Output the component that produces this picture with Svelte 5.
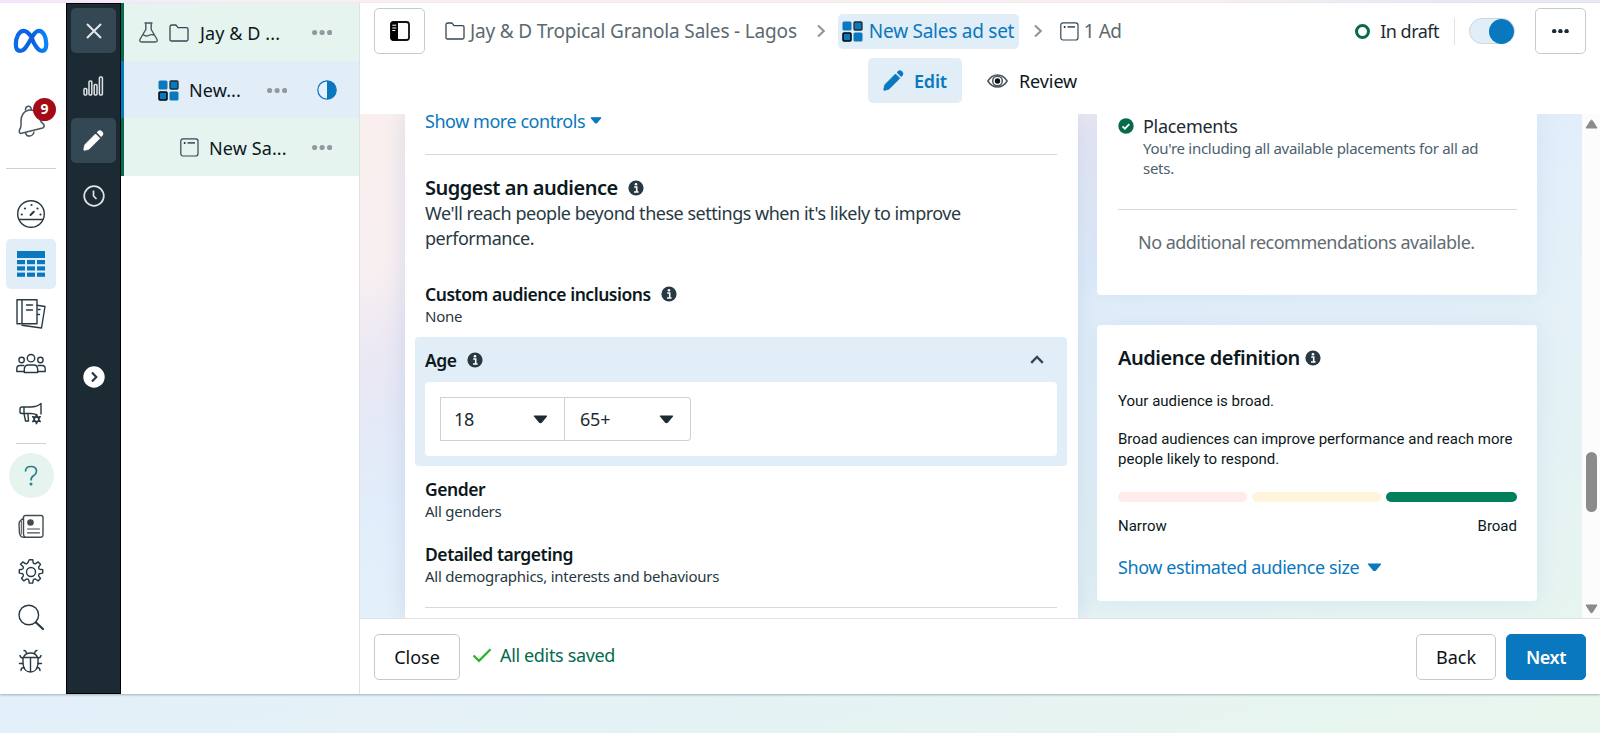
<script>
  const nav = [
    { icon: 'gauge' },
    { icon: 'table', active: true },
    { icon: 'pages' },
    { icon: 'people' },
    { icon: 'megaphone' },
  ]

  const tools = ['news', 'gear', 'search', 'bug']

  const ages = ['18', '65+']

  const levels = ['narrow', 'medium', 'broad']
</script>

{#snippet info()}
  <svg class="info" width="16" height="16" viewBox="0 0 16 16">
    <circle cx="8" cy="8" r="7.6" fill="#283943" />
    <path d="M6.2 7h2.5v5M6 12h4.6" stroke="#fff" stroke-width="1.6" fill="none" />
    <circle cx="8" cy="4.2" r="1.3" fill="#fff" />
  </svg>
{/snippet}

{#snippet caret(w, h)}
  <svg width={w} height={h} viewBox="0 0 14 8.4">
    <path d="M1.4 1h11.2L8 6.600q-1 1-2 0z" fill="currentColor" stroke="currentColor" stroke-width="1.2" stroke-linejoin="round" />
  </svg>
{/snippet}

{#snippet folder()}
  <svg width="20" height="18" viewBox="0 0 20 18" fill="none" stroke="#344854" stroke-width="1.3" stroke-linejoin="round">
    <path d="M1 3Q1 1 3 1h3.2q1 0 1.5.8L9 3.6h8.5Q19 3.6 19 5v10.500Q19 17 17.500 17h-15Q1 17 1 15.500z" />
  </svg>
{/snippet}

{#snippet adset()}
  <svg width="21" height="21" viewBox="0 0 21 21">
    <g fill="#0a78be">
      <rect x="0.500" y="0.500" width="9" height="9" rx="1.500" />
      <rect x="12" y="1" width="8" height="8" rx="1" stroke="#1c2b33" stroke-width="1.3" />
      <rect x="1" y="12" width="8" height="8" rx="1" stroke="#000" stroke-width="1.5" />
      <rect x="11.500" y="11.500" width="9" height="9" rx="1.500" />
    </g>
  </svg>
{/snippet}

{#snippet ad()}
  <svg width="19" height="19" viewBox="0 0 19 19" fill="none" stroke="#344854" stroke-width="1.2">
    <rect x="0.800" y="0.800" width="17.200" height="17.200" rx="2.200" />
    <path d="M7.500 4.900h7.500" stroke-width="1.5" />
    <circle cx="4.700" cy="4.900" r="1" fill="#1c2b33" stroke="none" />
  </svg>
{/snippet}

{#snippet dots(r, gap)}
  <svg width={gap * 2 + r * 2} height={r * 2} fill="currentColor">
    <circle cx={r} cy={r} {r} />
    <circle cx={r + gap} cy={r} {r} />
    <circle cx={r + gap * 2} cy={r} {r} />
  </svg>
{/snippet}

{#snippet pencil()}
  <svg width="21" height="21" viewBox="0 0 21 21" fill="currentColor">
    <path d="M12.500 4l4.300 4.300L6.600 18.600q-.5.5-1.100.7L1.700 20.300q-1.100.2-.9-.9l.8-4q.2-.6.7-1.100z" stroke="currentColor" stroke-width="0.800" stroke-linejoin="round" />
    <path d="M13.800 2.400l1.200-1.400q2-1.600 4.200.6 2 2.100.4 4L18.100 6.900z" />
  </svg>
{/snippet}

{#snippet chevron()}
  <svg width="10" height="14" viewBox="0 0 10 14" fill="none" stroke="#8a939a" stroke-width="2">
    <path d="M2 1.500L7.800 7 2 12.500" />
  </svg>
{/snippet}

{#snippet navIcon(name)}
  <svg width="30" height="30" viewBox="0 0 30 30" fill="none" stroke="#283943" stroke-width="1.4" stroke-linecap="round" stroke-linejoin="round">
    {#if name === 'gauge'}
      <circle cx="15" cy="15" r="13.300" />
      <path d="M3.300 20.500h23.400" />
      <path d="M14.500 16l3.300-3.300" stroke-width="2" />
      <g fill="#283943" stroke="none">
        <circle cx="5.800" cy="15.500" r="1.100" /><circle cx="9" cy="9.500" r="1.100" /><circle cx="15.500" cy="6" r="1.100" />
        <circle cx="21.500" cy="9.500" r="1.100" /><circle cx="24.500" cy="15.500" r="1.100" />
      </g>
    {:else if name === 'table'}
      <g fill="#0a78be" stroke="none">
        <rect x="1" y="2" width="28" height="7" />
        {#each [11, 17.3, 23.6] as y}
          {#each [1, 11, 21] as x}
            <rect {x} {y} width="8" height="4.200" />
          {/each}
        {/each}
      </g>
    {:else if name === 'pages'}
      <path d="M21 6.200l8 1.300L25.500 29 6 26.300" />
      <path d="M1 .8h20v24H1zM6 .8v24" />
      <path d="M10.500 6h6M10.500 11h6M22 10.500h2M21.500 15.500h2" />
    {:else if name === 'people'}
      <circle cx="15" cy="9.200" r="3.700" />
      <circle cx="5.600" cy="11" r="2.700" />
      <circle cx="24.400" cy="11" r="2.700" />
      <path d="M8.300 23.500v-3q0-4.500 4-4.500h5.400q4 0 4 4.500v3z" />
      <path d="M8 22.500H.8V20q0-3.500 3-3.500h4M22 22.500h7.200V20q0-3.500-3-3.500h-4" />
    {:else if name === 'megaphone'}
      <path d="M25 15V4.500q-4 3.500-10.500 3.500H6q-2 0-2 2v3q0 1.500 2 1.500h8.500q4 0 6.500 1.500M8 8v6" />
      <path d="M8 14.500l1.500 7.500h3l-.6-7.500" />
      <path d="M20.500 15.500l1 2.700 2.800-.6-1.700 2.500 1.700 2.500-2.800-.6-1 2.700-1-2.700-2.800.6 1.700-2.500-1.700-2.500 2.800.6z" fill="#283943" />
      <circle cx="20.500" cy="20.200" r="1.500" fill="#fff" stroke="none" />
    {:else if name === 'news'}
      <g stroke="#444b50">
        <path d="M7.500 5.500q0-2 2-2H25q2 0 2 2v17.500q0 2-2 2.300H8q-3.500 0-4.500-4L3 12q0-2 1.500-3.500l3-2.500zM7.500 6v16q0 2.500 1.500 3" />
        <path d="M5.300 9v13" stroke-width="1" />
        <circle cx="14.500" cy="10.500" r="2.600" fill="#444b50" />
        <path d="M11.500 17h12M11.500 20.800h12" stroke-width="1.2" />
      </g>
    {:else if name === 'gear'}
      <circle cx="15" cy="15" r="4.500" />
      <path d="M13.300 2.700h3.400l.5 2.900q.3.700 1 1 .8.300 1.500 0l2.400-1.700 2.400 2.400-1.700 2.500q-.4.700 0 1.400.3.800 1 1l2.900.5v3.400l-2.900.5q-.7.300-1 1-.3.800 0 1.500l1.700 2.400-2.400 2.400-2.400-1.700q-.7-.3-1.500 0-.7.300-1 1l-.5 2.900h-3.400l-.5-2.900q-.3-.7-1-1-.8-.3-1.500 0l-2.400 1.700-2.400-2.400 1.700-2.400q.3-.7 0-1.500-.3-.7-1-1l-2.900-.5v-3.400l2.900-.5q.7-.3 1-1 .3-.8 0-1.500L4.500 7.300l2.400-2.400 2.400 1.700q.7.300 1.500 0 .7-.3 1-1z" />
    {:else if name === 'search'}
      <circle cx="12.800" cy="13" r="9.800" />
      <path d="M20 20.500l7 6.500" stroke-width="2.200" />
    {:else if name === 'bug'}
      <path d="M7.500 10.500Q9 6 14.500 6t7 4.500zM7 10.500v6.500q1 8 7.500 8t7.500-8v-6.500M14.500 11v14" />
      <path d="M8 3.500q2 0 2.500 3M21 3.500q-2 0-2.500 3M7 11q-2.500 0-3-2.500M22 11q2.500 0 3-2.500M7 16.500H3.500M22 16.500h3.500M8 20.500q-3 0-3 3M21 20.500q3 0 3 3" />
    {/if}
  </svg>
{/snippet}

<div class="page">
  <div class="app">
    <nav class="rail">
      <svg class="logo" width="36" height="26" viewBox="0 0 36 26" fill="none" stroke-width="4.200" stroke-linecap="round">
        <defs>
          <linearGradient id="meta" x1="0" x2="1">
            <stop offset="0" stop-color="#0a6be8" />
            <stop offset="0.550" stop-color="#0a60df" />
            <stop offset="1" stop-color="#0a85fc" />
          </linearGradient>
        </defs>
        <path stroke="url(#meta)" d="M18 8.500C15.500 4.500 13.300 2.800 10.700 2.800 6 2.800 2.800 9.500 2.800 16.200c0 4 1.600 6.700 4.500 6.700 3.500 0 5.500-3.200 8-7.400L19 9.300c2-3.700 4.200-6.500 7-6.500 4.300 0 7.300 6.300 7.300 13.200 0 4.400-1.500 6.900-4.400 6.900-3.300 0-5.100-3-7.900-7.700z" />
      </svg>

      <div class="bell">
        <svg width="30" height="34" viewBox="0 0 30 34" fill="none" stroke="#4a565e" stroke-width="1.500" stroke-linejoin="round">
          <path d="M4.500 30.500Q3 30 3.300 27.500 5.500 24 5 19.500 4.500 9 13 7q8.500-.8 10.500 8 1.200 4.500 4.200 6.300 1.300 2.500-1 3.700z" />
          <path d="M9.500 7.500Q9.200 3.500 12.200 3.200 15 3 15.500 7M9.500 30q1 3.500 4.500 3 3.500-.5 4-4.500" />
        </svg>
        <span class="badge">9</span>
      </div>

      <div class="line wide"></div>

      {#each nav as item}
        <div class="nav-item" class:active={item.active}>{@render navIcon(item.icon)}</div>
      {/each}

      <div class="line"></div>

      <div class="help">
        <svg width="14" height="22" viewBox="0 0 14 22" fill="none" stroke="#2b7f8b" stroke-width="1.700">
          <path d="M1.500 6.500Q1.500 1.500 7 1.500t5.500 4.700q0 2.600-2.700 4.400Q7 12.200 7 15.500" />
          <circle cx="7" cy="19" r="1.500" fill="#2b7f8b" stroke="none" />
        </svg>
      </div>

      {#each tools as t}
        <div class="tool">{@render navIcon(t)}</div>
      {/each}
    </nav>

    <div class="dark">
      <div class="dark-btn filled">
        <svg width="18" height="18" viewBox="0 0 18 18" stroke="#e4e8ea" stroke-width="2"><path d="M2 2l14 14M16 2L2 16" /></svg>
      </div>
      <div class="dark-btn">
        <svg width="21" height="20" viewBox="0 0 21 20" fill="none" stroke="#dfe3e6" stroke-width="1.500">
          <rect x="1" y="12.500" width="2.800" height="6.500" rx="1" />
          <rect x="6" y="5" width="2.800" height="14" rx="1" />
          <rect x="11.200" y="8.500" width="2.800" height="10.500" rx="1" />
          <rect x="16.400" y="1" width="3" height="18" rx="1" />
        </svg>
      </div>
      <div class="dark-btn filled">{@render pencil()}</div>
      <div class="dark-btn">
        <svg width="22" height="22" viewBox="0 0 22 22" fill="none" stroke="#dfe3e6" stroke-width="1.700">
          <circle cx="11" cy="11" r="9.800" />
          <path d="M10.500 5.500V11l3 3" />
        </svg>
      </div>
      <svg class="expand" width="22" height="22" viewBox="0 0 22 22">
        <circle cx="11" cy="11" r="10.700" fill="#fff" />
        <path d="M9 6.500l4.300 4.500L9 15.500" fill="none" stroke="#283943" stroke-width="2.200" />
      </svg>
    </div>

    <aside class="tree">
      <div class="row campaign">
        <svg width="19" height="21" viewBox="0 0 19 21" fill="none" stroke="#4a565e" stroke-width="1.400" stroke-linejoin="round">
          <path d="M5.500 1h8M6.800 1v6.500L1.200 17q-1.300 3 1.500 3h13.600q2.800 0 1.500-3L12.200 7.500V1M4 12.500q3 2.500 5.500 1t5.500-.5" />
        </svg>
        {@render folder()}
        <span class="row-name">Jay &amp; D ...</span>
        <span class="more">{@render dots(2.6, 7.5)}</span>
      </div>
      <div class="row adset">
        {@render adset()}
        <span class="row-name">New...</span>
        <span class="more">{@render dots(2.6, 7.5)}</span>
        <svg class="half" width="20" height="20" viewBox="0 0 20 20">
          <circle cx="10" cy="10" r="9.200" fill="#e4f1fb" stroke="#0a78be" stroke-width="1.200" />
          <path d="M10 .8a9.200 9.200 0 0 1 0 18.400z" fill="#0a78be" />
        </svg>
      </div>
      <div class="row ad">
        {@render ad()}
        <span class="row-name">New Sa...</span>
        <span class="more">{@render dots(2.6, 7.5)}</span>
      </div>
    </aside>

    <main>
      <header>
        <div class="crumbs">
          <button class="box">
            <svg width="20" height="20" viewBox="0 0 20 20">
              <rect x="1" y="1" width="18" height="18" rx="2.500" fill="#fff" stroke="#111" stroke-width="1.800" />
              <path d="M2.500.5H8v19H2.500q-2 0-2-2v-15q0-2 2-2z" fill="#000" />
              <path d="M2.300 4.200h4M2.300 7h4M2.300 9.500h3" stroke="#fff" stroke-width="1" />
            </svg>
          </button>
          <span class="crumb first">{@render folder()}<span>Jay &amp; D Tropical Granola Sales - Lagos</span></span>
          {@render chevron()}
          <span class="crumb current">{@render adset()}<span>New Sales ad set</span></span>
          {@render chevron()}
          <span class="crumb last">{@render ad()}<span>1 Ad</span></span>

          <div class="status">
            <span class="ring"></span>
            <span class="draft">In draft</span>
            <span class="sep"></span>
            <span class="toggle"><span class="knob"></span></span>
            <button class="box dark-dots">{@render dots(2.2, 6.2)}</button>
          </div>
        </div>
        <div class="tabs">
          <button class="tab on">{@render pencil()}<span>Edit</span></button>
          <button class="tab">
            <svg width="21" height="14" viewBox="0 0 21 14" fill="none" stroke="#4a565e" stroke-width="1.500">
              <path d="M.9 7Q4.500.9 10.500.9T20.100 7q-3.600 6.100-9.600 6.100T.9 7z" />
              <circle cx="10.500" cy="7" r="4.800" />
              <circle cx="10.500" cy="7" r="2.700" fill="#111" stroke="none" />
            </svg>
            <span>Review</span>
          </button>
        </div>
      </header>

      <section class="content">
        <div class="form">
          <div class="link controls">Show more controls {@render caret(12, 7.2)}</div>
          <hr />
          <h2>Suggest an audience {@render info()}</h2>
          <p class="lead">We'll reach people beyond these settings when it's likely to improve performance.</p>

          <div class="field inclusions">
            <h3>Custom audience inclusions {@render info()}</h3>
            <p>None</p>
          </div>

          <div class="age">
            <div class="age-head">
              <h3>Age {@render info()}</h3>
              <svg width="14" height="9" viewBox="0 0 14 9" fill="none" stroke="#344854" stroke-width="2.400"><path d="M1.200 7.800L7 2l5.800 5.800" /></svg>
            </div>
            <div class="age-body">
              {#each ages as a}
                <div class="select"><span>{a}</span>{@render caret(15, 9)}</div>
              {/each}
            </div>
          </div>

          <div class="field gender">
            <h3>Gender</h3>
            <p>All genders</p>
          </div>
          <div class="field targeting">
            <h3>Detailed targeting</h3>
            <p>All demographics, interests and behaviours</p>
          </div>
          <hr class="end" />
        </div>

        <div class="side">
          <div class="card recs">
            <div class="placement">
              <svg width="16" height="16" viewBox="0 0 16 16">
                <circle cx="8" cy="8" r="7.700" fill="#056b4c" />
                <path d="M4.500 8.300l2.400 2.400 4.400-4.600" fill="none" stroke="#fff" stroke-width="1.700" />
              </svg>
              <div>
                <div class="place-title">Placements</div>
                <p>You're including all available placements for all ad sets.</p>
              </div>
            </div>
            <hr />
            <p class="none">No additional recommendations available.</p>
          </div>

          <div class="card audience">
            <h2>Audience definition {@render info()}</h2>
            <p>Your audience is broad.</p>
            <p>Broad audiences can improve performance and reach more people likely to respond.</p>
            <div class="meter">
              {#each levels as level}
                <span class={level}></span>
              {/each}
            </div>
            <div class="ends"><span>Narrow</span><span>Broad</span></div>
            <div class="link estimate">Show estimated audience size {@render caret(15, 9)}</div>
          </div>
        </div>

        <div class="scrollbar">
          <svg width="13" height="10" viewBox="0 0 13 10"><path d="M1 9h11L7.500 1.800q-1-1.300-2 0z" fill="#8b8b8b" stroke="#8b8b8b" stroke-linejoin="round" /></svg>
          <span class="thumb"></span>
          <svg width="13" height="10" viewBox="0 0 13 10"><path d="M1 1h11L7.500 8.200q-1 1.300-2 0z" fill="#8b8b8b" stroke="#8b8b8b" stroke-linejoin="round" /></svg>
        </div>
      </section>

      <footer>
        <button class="btn close">Close</button>
        <svg class="tick" width="20" height="15" viewBox="0 0 20 15" fill="none" stroke="#2bb52b" stroke-width="2.300"><path d="M1.500 7.500l5.500 5.300L18.500 1.200" /></svg>
        <span class="saved">All edits saved</span>
        <button class="btn back">Back</button>
        <button class="btn next">Next</button>
      </footer>
    </main>
  </div>
</div>

<style>
  :global(body) {
    margin: 0;
    overflow: hidden;
  }

  .page {
    height: 733px;
    box-sizing: border-box;
    padding-top: 3px;
    background: linear-gradient(161.6deg, #f4e6fb 0%, #f8eef6 6%, #faefee 18%, #f8eff1 31%, #ebe8f4 38%, #e5e9f6 43%, #e1edfa 50%, #e4f0f9 58%, #e5f2f5 74%, #e8f6ee 97%);
    color: #0c1820;
    font-family: "Noto Sans", "Open Sans", sans-serif;
    font-size: 18px;
  }

  .page :global(svg) { flex: none; display: block; }

  .app {
    display: flex;
    height: 691px;
    box-shadow: 0 1px 2px rgba(60, 80, 90, 0.4);
  }

  h2, h3, p { margin: 0; }

  hr {
    border: 0;
    height: 1px;
    margin: 0;
    background: #d5d9dd;
  }

  button {
    font: inherit;
    color: inherit;
    padding: 0;
  }

  /* icon rail */
  .rail {
    width: 66px;
    background: #fff;
    display: flex;
    flex-direction: column;
    align-items: center;
    box-sizing: border-box;
    padding: 25px 4px 0 0;
  }

  .bell {
    position: relative;
    width: 30px;
    height: 34px;
    margin: 49px 0 31px;
  }

  .badge {
    position: absolute;
    left: 17px;
    top: -5px;
    width: 23px;
    height: 23px;
    border-radius: 50%;
    background: #a40b16;
    color: #fff;
    font-size: 14px;
    font-weight: 700;
    line-height: 22px;
    text-align: center;
  }

  .line {
    width: 30px;
    height: 1px;
    margin: 4px 0 9px;
    background: #ced2d8;
  }

  .line.wide {
    width: 50px;
    margin: 0 0 20px;
  }

  .nav-item {
    width: 50px;
    height: 50px;
    border-radius: 5px;
    display: grid;
    place-items: center;
  }

  .nav-item.active { background: #e1edf7; }

  .help {
    width: 45px;
    height: 45px;
    border-radius: 50%;
    background: #e5f4ef;
    display: grid;
    place-items: center;
    margin-bottom: 6px;
  }

  .tool { height: 45px; display: grid; place-items: center; }

  /* dark toolbar */
  .dark {
    width: 55px;
    box-sizing: border-box;
    border: 1px solid #000;
    background: #1c2b33;
    color: #fff;
    display: flex;
    flex-direction: column;
    align-items: center;
    gap: 10px;
    padding-top: 4px;
  }

  .dark-btn {
    width: 45px;
    height: 45px;
    border-radius: 5px;
    display: grid;
    place-items: center;
  }

  .dark-btn.filled { background: #344854; }

  .expand { margin-top: 138px; }

  /* campaign tree */
  .tree {
    width: 239px;
    box-sizing: border-box;
    background: #fff;
    border-right: 1px solid #dfe1e4;
  }

  .row {
    display: flex;
    align-items: center;
    height: 57.5px;
    box-sizing: border-box;
    border-left: 3px solid #056b4c;
    background: #e5f4ee;
    padding: 2px 27px 0 0;
  }

  .row.campaign { padding-left: 15px; }
  .row.campaign :global(svg + svg) { margin-left: 11px; }
  .row.adset { padding-left: 34px; padding-right: 22px; background: #e1edf7; border-color: #0a78be; }
  .row.ad { padding-left: 56px; }

  .row-name { margin-left: 10px; white-space: nowrap; letter-spacing: 0.1px; }
  .campaign .row-name { margin-left: 11px; }

  .more { margin-left: auto; color: #9199a1; }

  .half { margin-left: 30px; }

  main {
    flex: 1;
    display: flex;
    flex-direction: column;
    min-width: 0;
  }

  header {
    height: 111px;
    background: #fff;
    box-sizing: border-box;
    padding: 5px 14px 0;
  }

  .crumbs {
    display: flex;
    align-items: center;
    height: 46px;
    color: #5c6970;
    font-size: 19px;
    letter-spacing: -0.17px;
  }

  .box {
    width: 51px;
    height: 46px;
    display: grid;
    place-items: center;
    background: #fff;
    border: 1px solid #c3cbd3;
    border-radius: 5px;
  }

  .crumb {
    display: flex;
    align-items: center;
    gap: 5px;
    white-space: nowrap;
  }

  .crumb.first { margin: 0 19px 0 20px; }

  .crumb.current {
    box-sizing: border-box;
    width: 181px;
    height: 35px;
    margin: 0 14px 0 12px;
    padding-left: 4px;
    border-radius: 5px;
    background: #e1edf7;
    color: #0a78be;
    gap: 6px;
    letter-spacing: -0.25px;
  }

  .crumb.last { margin-left: 17px; letter-spacing: -0.5px; }

  .status {
    margin-left: auto;
    display: flex;
    align-items: center;
    color: #1c2b33;
    font-size: 18px;
  }

  .ring {
    width: 9px;
    height: 9px;
    border: 3px solid #056b4c;
    border-radius: 50%;
    margin-right: 10px;
  }

  .draft { letter-spacing: -0.5px; }

  .sep {
    width: 1px;
    height: 27px;
    background: #dfe1e4;
    margin: 0 14px 0 15px;
  }

  .toggle {
    width: 46px;
    height: 26px;
    box-sizing: border-box;
    border-radius: 13px;
    border: 1px solid #ccd8e0;
    background: #e1edf7;
    display: flex;
    align-items: center;
    justify-content: flex-end;
    margin-right: 20px;
  }

  .knob {
    width: 25px;
    height: 25px;
    border-radius: 50%;
    background: #0a78be;
  }

  .dark-dots { color: #1c2b33; }

  .tabs {
    display: flex;
    padding: 4px 0 0 494px;
    gap: 10px;
  }

  .tab {
    height: 45px;
    border: 0;
    border-radius: 5px;
    background: none;
    display: flex;
    align-items: center;
    gap: 11px;
    padding: 0 15px;
    letter-spacing: -0.1px;
  }

  .tab.on {
    width: 94px;
    background: #e1edf7;
    color: #0a78be;
    font-weight: 600;
    gap: 10px;
    letter-spacing: -0.2px;
  }

  .content {
    height: 504px;
    display: flex;
    overflow: hidden;
    letter-spacing: -0.46px;
  }

  .form {
    width: 673px;
    box-sizing: border-box;
    margin-left: 45px;
    padding: 0 21px 0 20px;
    background: #fff;
    box-shadow: 0 0 20px rgba(150, 175, 215, 0.35);
  }

  .link { color: #0a78be; display: flex; align-items: center; gap: 5px; white-space: nowrap; }

  .controls { height: 14px; margin-bottom: 26px; }

  h2 {
    display: flex;
    align-items: center;
    gap: 10px;
    font-size: 20px;
    line-height: 26px;
    font-weight: 600;
    white-space: nowrap;
  }

  h3 {
    display: flex;
    align-items: center;
    gap: 10px;
    font-size: 17.5px;
    line-height: 24px;
    font-weight: 600;
    white-space: nowrap;
  }

  .form h2 { margin-top: 20px; letter-spacing: -0.5px; }

  .lead {
    color: #283943;
    line-height: 25px;
    width: 560px;
    letter-spacing: -0.48px;
  }

  .field p {
    color: #283943;
    font-size: 15px;
    line-height: 21px;
    letter-spacing: -0.25px;
  }

  .inclusions { margin-top: 31px; }

  .age {
    margin: 10px -10px 0;
    height: 129px;
    box-sizing: border-box;
    padding: 0 10px;
    background: #e1edf7;
    border-radius: 4px;
  }

  .age-head {
    height: 45px;
    display: flex;
    align-items: center;
    justify-content: space-between;
    padding-right: 13px;
  }

  .age-body {
    height: 74px;
    box-sizing: border-box;
    padding: 15px;
    display: flex;
    background: #fff;
    border-radius: 4px;
  }

  .select {
    width: 125px;
    height: 44px;
    box-sizing: border-box;
    border: 1px solid #ccd2d9;
    display: flex;
    align-items: center;
    justify-content: space-between;
    padding: 0 16px 0 13px;
    color: #1c2b33;
    letter-spacing: -0.2px;
  }

  .select + .select { width: 126px; border-left: 0; border-radius: 0 4px 4px 0; padding-left: 15px; }

  .gender { margin-top: 11px; }
  .targeting { margin-top: 20px; }
  .end { margin-top: 20px; }

  .side {
    width: 440px;
    margin: 0 45px 0 19px;
  }

  .card {
    box-sizing: border-box;
    background: #fff;
    border-radius: 4px;
    padding: 0 20px 0 21px;
    box-shadow: 0 0 22px rgba(165, 200, 235, 0.3);
  }

  .recs { height: 181px; border-radius: 0 0 4px 4px; }

  .placement { display: flex; gap: 9px; height: 95px; padding-right: 20px; }

  .placement :global(svg) { margin-top: 4px; }

  .place-title { line-height: 24px; color: #1c2b33; letter-spacing: -0.3px; }

  .placement p {
    font-size: 15px;
    line-height: 20px;
    letter-spacing: -0.28px;
    color: #4a606f;
  }

  .none { padding: 20px 0 0 20px; line-height: 25px; letter-spacing: -0.52px; color: #5f6b73; white-space: nowrap; }

  .audience {
    height: 276px;
    margin-top: 30px;
    padding-top: 20px;
    font-family: Roboto, sans-serif;
    font-size: 15px;
    letter-spacing: 0;
  }

  .audience h2 {
    font-family: "Noto Sans", sans-serif;
    letter-spacing: -0.45px;
    gap: 5px;
  }

  .audience p { line-height: 20px; margin-top: 18px; }

  .audience h2 + p { margin-top: 20px; }

  .meter {
    display: grid;
    grid-template-columns: 129px 129px 131px;
    column-gap: 5px;
    height: 10px;
    margin-top: 23px;
  }

  .meter span { border-radius: 5px; }
  .narrow { background: #ffebea; }
  .medium { background: #fff4dc; }
  .broad { background: #00805a; }

  .ends {
    display: flex;
    justify-content: space-between;
    margin-top: 14px;
    line-height: 20px;
  }

  .estimate {
    margin-top: 19px;
    height: 24px;
    gap: 8px;
    font-family: "Noto Sans", sans-serif;
    font-size: 18px;
    letter-spacing: -0.43px;
  }

  .scrollbar {
    width: 18px;
    box-sizing: border-box;
    padding: 5px 0 4px;
    background: #fcfcfc;
    display: flex;
    flex-direction: column;
    align-items: center;
  }

  .thumb {
    width: 11px;
    height: 60px;
    border-radius: 6px;
    background: #8b8b8b;
    margin: 323px 0 auto;
  }

  footer {
    flex: 1;
    display: flex;
    align-items: flex-start;
    box-sizing: border-box;
    border-top: 1px solid #dfe3e6;
    background: #fff;
    padding: 15px 14px 0;
  }

  .btn {
    height: 46px;
    box-sizing: border-box;
    background: #fff;
    border: 1px solid #c3c9d3;
    border-radius: 5px;
    color: #0c1114;
    padding-bottom: 1px;
  }

  .close { width: 86px; }
  .tick { margin: 14px 8px 0 12px; }
  .saved { color: #056b4c; line-height: 42px; letter-spacing: -0.35px; }
  .back { width: 80px; margin: 0 10px 0 auto; }
  .next { width: 80px; background: #0a78be; border-color: #0a78be; color: #fff; font-weight: 600; letter-spacing: -0.4px; }
</style>
